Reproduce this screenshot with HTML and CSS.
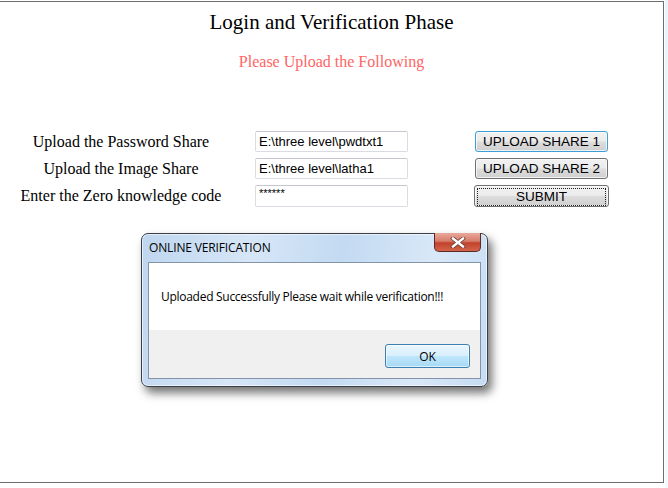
FILE: index.html
```html
<!DOCTYPE html>
<html>
<head>
<meta charset="utf-8">
<link rel="stylesheet" href="styles.css">
</head>
<body>
<div class="frame">
  <h1 class="title">Login and Verification Phase</h1>
  <p class="subtitle">Please Upload the Following</p>
  <div class="form">
    <label class="lbl">Upload the Password Share</label>
    <div class="field">E:\three level\pwdtxt1</div>
    <button class="btn btn-hover">UPLOAD SHARE 1</button>

    <label class="lbl">Upload the Image Share</label>
    <div class="field">E:\three level\latha1</div>
    <button class="btn">UPLOAD SHARE 2</button>

    <label class="lbl">Enter the Zero knowledge code</label>
    <div class="field pw">******</div>
    <button class="btn btn-focus"><span class="focus-ring">SUBMIT</span></button>
  </div>
</div>
<div class="side"></div>

<div class="dialog">
  <div class="dlg-title">ONLINE VERIFICATION</div>
  <div class="close">
    <svg width="16" height="11" viewBox="0 0 16 11"><path d="M3 1.5 L13 9.5 M13 1.5 L3 9.5" stroke="#6b3b36" stroke-width="4" stroke-linecap="square"/><path d="M3 1.5 L13 9.5 M13 1.5 L3 9.5" stroke="#fff" stroke-width="2.4" stroke-linecap="square"/></svg>
  </div>
  <div class="client">
    <div class="msg">Uploaded Successfully Please wait while verification!!!</div>
    <div class="actions">
      <button class="ok">OK</button>
    </div>
  </div>
</div>
</body>
</html>
```
FILE: styles.css
```css
html, body {
  margin: 0;
  padding: 0;
  background: #ffffff;
  width: 668px;
  height: 488px;
  overflow: hidden;
}
body {
  position: relative;
  font-family: "Liberation Serif", "Times New Roman", serif;
}
.frame {
  margin-top: 1px;
  width: 663px;
  height: 480px;
  border-top: 1px solid #6e6e6e;
  border-right: 1px solid #6e6e6e;
  border-bottom: 1px solid #6e6e6e;
  background: #fff;
}
.side {
  position: absolute;
  left: 665px;
  top: 0;
  width: 3px;
  height: 488px;
  background: linear-gradient(#e8f4fb, #f4fbfe);
}
.title {
  margin: 0;
  padding-top: 8px;
  font-weight: normal;
  font-size: 21px;
  line-height: 24px;
  text-align: center;
  color: #000;
}
.subtitle {
  margin: 19px 0 0 0;
  font-size: 16px;
  line-height: 18px;
  text-align: center;
  color: #ff6464;
}
.form {
  margin-top: 60px;
  display: grid;
  grid-template-columns: 242px 153px 133px;
  column-gap: 13px;
  row-gap: 6px;
  grid-auto-rows: 21px;
  align-items: center;
}
.form > .btn { margin-left: 54px; }
.lbl {
  text-align: center;
  font-size: 16px;
  color: #000;
}
.field {
  box-sizing: border-box;
  height: 21px;
  border: 1px solid #d9dde3;
  border-top-color: #c4c8ce;
  border-radius: 2px;
  font-family: "Liberation Sans", Arial, sans-serif;
  font-size: 13px;
  line-height: 19px;
  padding-left: 3px;
  color: #000;
  background: #fff;
}
.field.pw {
  font-size: 11px;
  line-height: 14px;
  height: 22px;
}
.btn {
  box-sizing: border-box;
  height: 21px;
  width: 133px;
  padding: 0;
  border: 1px solid #707070;
  border-radius: 3px;
  background: linear-gradient(#f2f2f2 0%, #ebebeb 48%, #dddddd 52%, #cfcfcf 100%);
  font-family: "Liberation Sans", Arial, sans-serif;
  font-size: 13.5px;
  color: #000;
  box-shadow: inset 0 0 0 1px rgba(255,255,255,0.7);
}
.btn-hover {
  border-color: #3c9fd8;
}
.btn-focus {
  width: 135px;
  height: 22px;
  margin-left: 53px !important;
  padding: 2px;
}
.focus-ring {
  display: block;
  height: 16px;
  line-height: 15px;
  border: 1px dotted #222;
}
.dialog {
  position: absolute;
  left: 141px;
  top: 233px;
  width: 345px;
  height: 152px;
  border: 1px solid #3a3f47;
  border-radius: 7px;
  background: linear-gradient(100deg, #bfd6ef 0%, #d6e6f7 30%, #c3daf2 55%, #d9e8f8 80%, #c6dcf3 100%);
  box-shadow: 4px 6px 10px rgba(0,0,0,0.55), inset 0 0 0 1px rgba(255,255,255,0.6);
}
.dlg-title {
  position: absolute;
  left: 7px;
  top: 6px;
  font-family: "Open Sans", "Noto Sans", sans-serif;
  font-size: 12px;
  line-height: 16px;
  letter-spacing: -0.15px;
  color: #000;
}
.close {
  position: absolute;
  left: 292px;
  top: -1px;
  width: 45px;
  height: 18px;
  border: 1px solid #5c2a22;
  border-top: none;
  border-radius: 0 0 5px 5px;
  background: linear-gradient(#e9a99c 0%, #d77c6c 45%, #c2412b 55%, #d2654c 100%);
  display: flex;
  align-items: center;
  justify-content: center;
}
.client {
  position: absolute;
  left: 6px;
  top: 28px;
  width: 331px;
  height: 115px;
  border: 1px solid #8394a8;
  background: #f0f0f0;
  display: flex;
  flex-direction: column;
}
.msg {
  height: 67px;
  background: #fff;
  box-sizing: border-box;
  padding-left: 12px;
  padding-top: 26px;
  font-family: "Open Sans", "Noto Sans", sans-serif;
  font-size: 12px;
  line-height: 16px;
  letter-spacing: -0.28px;
  color: #000;
}
.actions {
  flex: 1;
  display: flex;
  justify-content: flex-end;
  align-items: flex-start;
  padding-top: 14px;
  padding-right: 10px;
}
.ok {
  box-sizing: border-box;
  width: 85px;
  height: 24px;
  border: 1px solid #3c7fb1;
  border-radius: 3px;
  background: linear-gradient(#eaf6fd 0%, #d9f0fc 48%, #bee6fd 52%, #a7d9f5 100%);
  box-shadow: inset 0 0 0 1px rgba(255,255,255,0.6);
  font-family: "Open Sans", "Noto Sans", sans-serif;
  font-size: 12px;
  color: #000;
  padding: 0;
}
```
